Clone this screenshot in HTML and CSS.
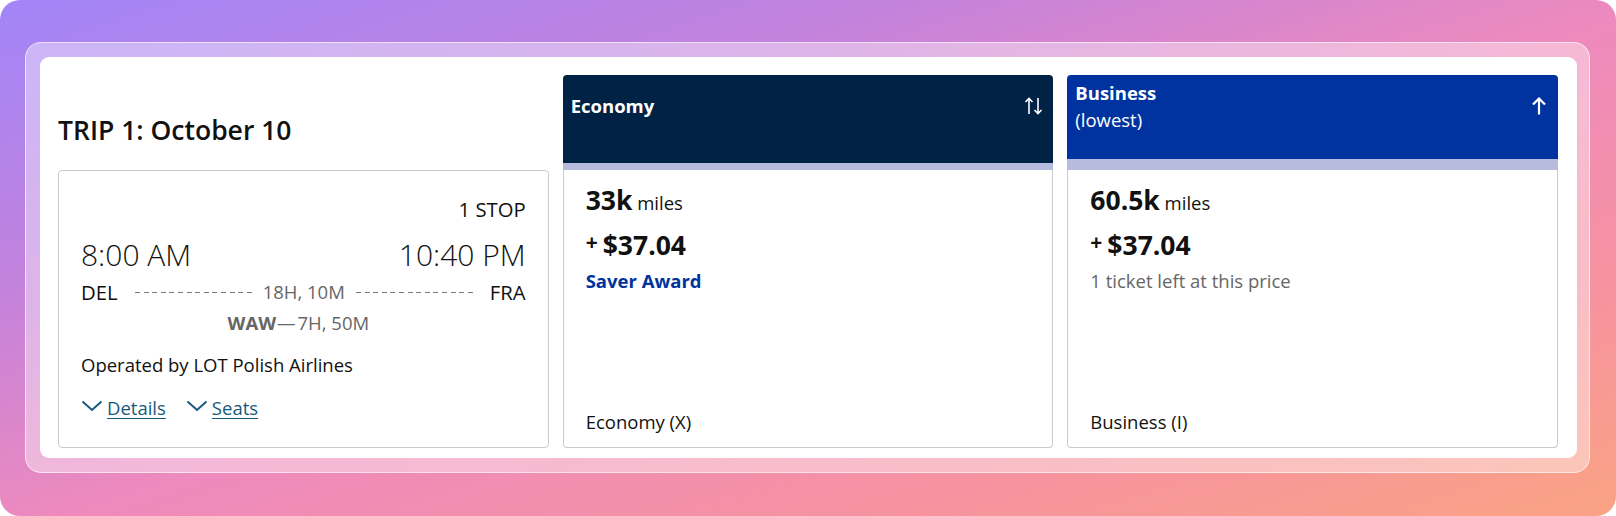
FILE: index.html
```html
<!DOCTYPE html>
<html lang="en">
<head>
<meta charset="utf-8">
<title>Trip 1</title>
<link rel="stylesheet" href="styles.css">
</head>
<body>
<div class="bg">
  <div class="frame">
    <div class="card">
      <section class="col">
        <div class="col-top title-wrap">
          <h2 class="trip-title">TRIP 1: October 10</h2>
        </div>
        <div class="body flight">
          <div class="stops">1 STOP</div>
          <div class="times">
            <span>8:00 AM</span>
            <span>10:40 PM</span>
          </div>
          <div class="route">
            <span class="code">DEL</span>
            <span class="dash left"></span>
            <span class="dur">18H, 10M</span>
            <span class="dash right"></span>
            <span class="code">FRA</span>
          </div>
          <div class="layover"><b>WAW</b><span class="em">—</span>7H, 50M</div>
          <div class="operator">Operated by LOT Polish Airlines</div>
          <div class="links">
            <a class="link" href="#">
              <svg class="chev" viewBox="0 0 22 12" width="22" height="12"><path d="M1.5 1.5 L11 10 L20.5 1.5" fill="none" stroke="currentColor" stroke-width="2"/></svg>
              <span>Details</span>
            </a>
            <a class="link" href="#">
              <svg class="chev" viewBox="0 0 22 12" width="22" height="12"><path d="M1.5 1.5 L11 10 L20.5 1.5" fill="none" stroke="currentColor" stroke-width="2"/></svg>
              <span>Seats</span>
            </a>
          </div>
        </div>
      </section>

      <section class="col">
        <div class="col-top head econ">
          <div class="head-inner">
            <div class="head-text"><strong>Economy</strong></div>
            <svg class="sort-icon" viewBox="0 0 20 18" width="20" height="18"><path d="M5 17 V1.5 M1.5 5 L5 1.5 L8.5 5 M14 1 V16.5 M10.5 13 L14 16.5 L17.5 13" fill="none" stroke="#fff" stroke-width="1.6"/></svg>
          </div>
        </div>
        <div class="body fare">
          <div class="miles"><span class="big">33k</span> miles</div>
          <div class="price"><span class="plus">+</span><span class="big">$37.04</span></div>
          <div class="saver">Saver Award</div>
          <div class="fare-class">Economy (X)</div>
        </div>
      </section>

      <section class="col">
        <div class="col-top head biz">
          <div class="head-inner">
            <div class="head-text"><strong>Business</strong><br>(lowest)</div>
            <svg class="sort-icon" viewBox="0 0 20 18" width="20" height="18"><path d="M10 17.5 V1.5 M4 7.5 L10 1.5 L16 7.5" fill="none" stroke="#fff" stroke-width="2.2"/></svg>
          </div>
        </div>
        <div class="body fare">
          <div class="miles"><span class="big">60.5k</span> miles</div>
          <div class="price"><span class="plus">+</span><span class="big">$37.04</span></div>
          <div class="note">1 ticket left at this price</div>
          <div class="fare-class">Business (I)</div>
        </div>
      </section>
    </div>
  </div>
</div>
</body>
</html>
```

FILE: styles.css
```css
* { box-sizing: border-box; }
html, body { margin: 0; padding: 0; background: #fff; }
body { font-family: "Open Sans", "Noto Sans", sans-serif; color: #111; }

.bg {
  width: 1616px;
  height: 516px;
  border-radius: 20px;
  background: linear-gradient(to bottom right, #a285f8 0%, #c382dc 28%, #ee8abd 52%, #f6939f 78%, #faa384 100%);
  padding: 42px 26px 43px 25px;
}

.frame {
  height: 100%;
  border-radius: 16px;
  background: rgba(255, 255, 255, 0.4);
  border: 1px solid rgba(255, 255, 255, 0.6);
  padding: 14px 12px 14px 14px;
}

.card {
  height: 100%;
  background: #fff;
  border-radius: 9px;
  padding: 18px 19px 10px 18px;
  display: grid;
  grid-template-columns: 1fr 1fr 1fr;
  column-gap: 14px;
}

.col {
  display: flex;
  flex-direction: column;
  min-width: 0;
}

.col-top { height: 95px; flex: none; }

.title-wrap {
  display: flex;
  align-items: center;
  padding-top: 14px;
}
.trip-title {
  margin: 0;
  font-size: 26.5px;
  font-weight: 600;
  color: #111;
}

.head {
  border-radius: 4px 4px 0 0;
  color: #fff;
  font-size: 18.5px;
  line-height: 27px;
}
.head.econ { background: #002244; border-bottom: 7px solid #b7bbde; }
.head.biz { background: #0033a0; border-bottom: 11px solid #b7bbde; }
.head-inner {
  height: 61px;
  display: flex;
  align-items: center;
  justify-content: space-between;
  padding: 0 9px 0 8px;
}
.head-text strong { font-weight: 700; }
.sort-icon { display: block; flex: none; }

.body {
  flex: 1;
  border: 1px solid #cbcbcb;
}
.flight {
  border-radius: 4px;
  padding: 24px 22px 0 22px;
  font-size: 18.5px;
}
.fare {
  border-top: none;
  border-radius: 0 0 4px 4px;
  display: flex;
  flex-direction: column;
  padding: 13px 22px 12px 22px;
  font-size: 18.5px;
}

.stops {
  text-align: right;
  font-size: 20.3px;
  line-height: 28px;
}
.times {
  display: flex;
  justify-content: space-between;
  font-size: 30px;
  font-weight: 300;
  line-height: 40px;
  margin-top: 12px;
}
.route {
  display: flex;
  align-items: center;
  font-size: 20.3px;
  line-height: 28px;
  margin-top: 3px;
}
.code { flex: none; }
.dash {
  flex: 1;
  height: 1px;
  background: repeating-linear-gradient(to right, #777 0 5px, transparent 5px 8.6px);
}
.dash.left { margin: 0 11px 0 17px; }
.dash.right { margin: 0 17px 0 11px; }
.dur { font-size: 18.5px; color: #666; flex: none; }

.layover {
  text-align: center;
  color: #666;
  font-size: 18.5px;
  line-height: 24px;
  margin-top: 5px;
  padding-right: 10px;
}
.layover b { font-weight: 700; }
.layover .em { margin: 0 2px 0 1px; }

.operator {
  font-size: 18.5px;
  line-height: 26px;
  margin-top: 17px;
}

.links {
  display: flex;
  gap: 20px;
  margin-top: 17px;
  line-height: 26px;
}
.link {
  display: flex;
  align-items: center;
  color: #17597c;
  font-size: 18.5px;
  text-decoration: none;
}
.link span {
  margin-left: 4px;
  text-decoration: underline;
  text-underline-offset: 3px;
  text-decoration-thickness: 1px;
}
.chev { display: block; margin-top: -4px; }

.miles {
  line-height: 34px;
  font-size: 18.5px;
}
.big { font-size: 26.5px; font-weight: 700; }
.price {
  line-height: 34px;
  margin-top: 5px;
}
.plus {
  font-size: 21px;
  font-weight: 700;
  vertical-align: 5px;
  margin-right: 5px;
}
.saver {
  color: #0033a0;
  font-weight: 700;
  font-size: 18.5px;
  line-height: 26px;
  margin-top: 3px;
}
.note {
  color: #666;
  font-size: 18.5px;
  line-height: 26px;
  margin-top: 3px;
}
.fare-class {
  margin-top: auto;
  font-size: 18.5px;
  line-height: 26px;
}
```
